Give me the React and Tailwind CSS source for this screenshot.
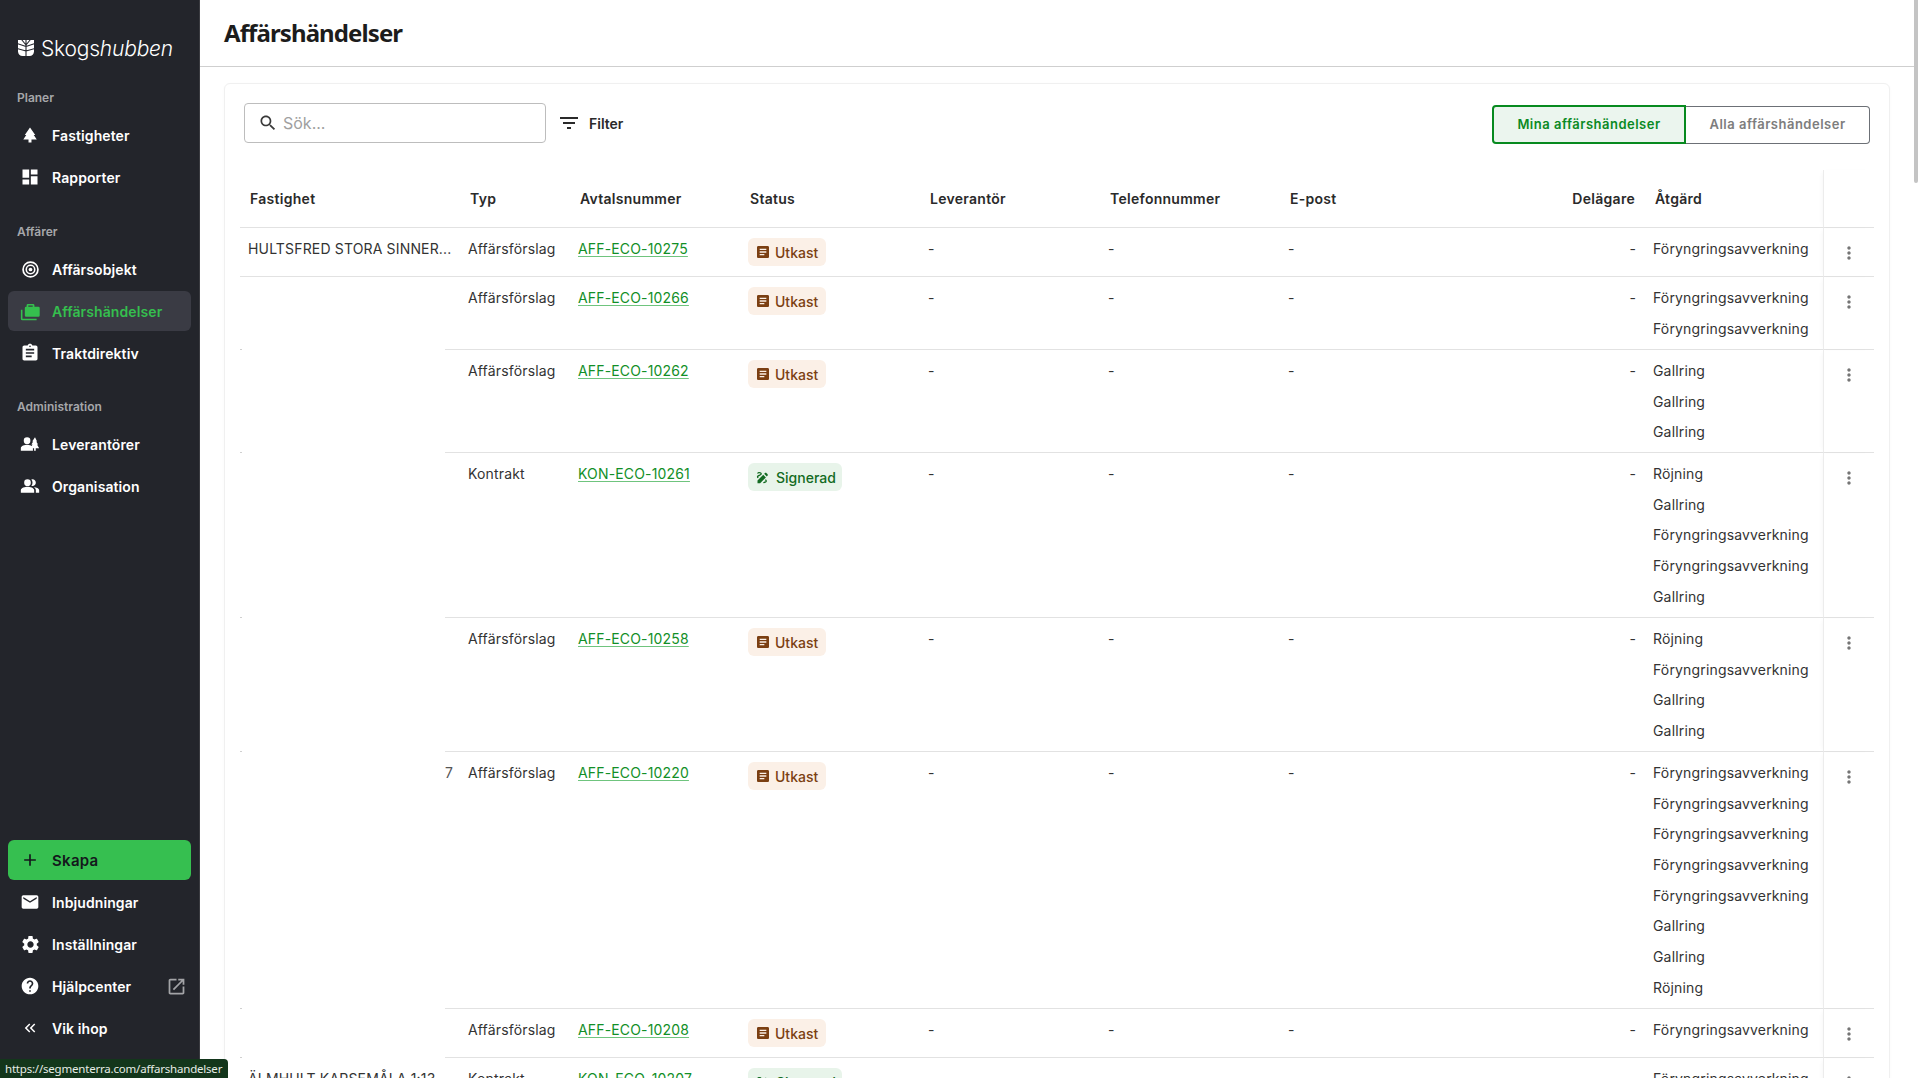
import React from 'react';

const Icon = ({ d, className = 'w-6 h-6', children }) => (
  <svg viewBox="0 0 24 24" fill="currentColor" className={className}>
    {d && <path d={d} />}
    {children}
  </svg>
);

const paths = {
  park: 'M17 12h2L12 2 5.05 12H7l-3.9 6h6.92v4h3.95v-4H21z',
  dashboard: 'M3 13h8V3H3v10zm0 8h8v-6H3v6zm10 0h8V11h-8v10zm0-18v6h8V3h-8z',
  assignment: 'M19 3h-4.18C14.4 1.84 13.3 1 12 1c-1.3 0-2.4.84-2.82 2H5c-1.1 0-2 .9-2 2v14c0 1.1.9 2 2 2h14c1.1 0 2-.9 2-2V5c0-1.1-.9-2-2-2zm-7 0c.55 0 1 .45 1 1s-.45 1-1 1-1-.45-1-1 .45-1 1-1zm2 14H7v-2h7v2zm3-4H7v-2h10v2zm0-4H7V7h10v2z',
  group: 'M16.67 13.13C18.04 14.06 19 15.32 19 17v3h4v-3c0-2.18-3.57-3.47-6.33-3.87zM9 4a4 4 0 1 0 0 8 4 4 0 0 0 0-8zM15 12c2.21 0 4-1.79 4-4s-1.79-4-4-4c-.47 0-.91.1-1.33.24C14.5 5.27 15 6.58 15 8s-.5 2.73-1.33 3.76c.42.14.86.24 1.33.24zM9 13c-2.67 0-8 1.34-8 4v3h16v-3c0-2.66-5.33-4-8-4z',
  supplier: 'M8.5 4a4 4 0 1 0 0 8 4 4 0 0 0 0-8zM8.5 13c-2.67 0-7.5 1.34-7.5 4v3h14.5v-3c0-2.66-4.33-4-7-4zM18 4l-3.4 5h1.2l-2.2 3.6h1.4l-1.6 2.9c.5.4 1 .9 1.3 1.5h2.2v3h2v-3H23l-2.6-4.4h1.3L19.5 9h1z',
  mail: 'M20 4H4c-1.1 0-1.99.9-1.99 2L2 18c0 1.1.9 2 2 2h16c1.1 0 2-.9 2-2V6c0-1.1-.9-2-2-2zm0 4l-8 5-8-5V6l8 5 8-5v2z',
  settings: 'M19.14 12.94c.04-.3.06-.61.06-.94 0-.32-.02-.64-.07-.94l2.03-1.58c.18-.14.23-.41.12-.61l-1.92-3.32c-.12-.22-.37-.29-.59-.22l-2.39.96c-.5-.38-1.03-.7-1.62-.94l-.36-2.54c-.04-.24-.24-.41-.48-.41h-3.84c-.24 0-.43.17-.47.41l-.36 2.54c-.59.24-1.13.57-1.62.94l-2.39-.96c-.22-.08-.47 0-.59.22L2.74 8.87c-.12.21-.08.47.12.61l2.03 1.58c-.05.3-.09.63-.09.94s.02.64.07.94l-2.03 1.58c-.18.14-.23.41-.12.61l1.92 3.32c.12.22.37.29.59.22l2.39-.96c.5.38 1.03.7 1.62.94l.36 2.54c.05.24.24.41.48.41h3.84c.24 0 .44-.17.47-.41l.36-2.54c.59-.24 1.13-.56 1.62-.94l2.39.96c.22.08.47 0 .59-.22l1.92-3.32c.12-.22.07-.47-.12-.61l-2.01-1.58zM12 15.6c-1.98 0-3.6-1.62-3.6-3.6s1.62-3.6 3.6-3.6 3.6 1.62 3.6 3.6-1.62 3.6-3.6 3.6z',
  help: 'M12 2C6.48 2 2 6.48 2 12s4.48 10 10 10 10-4.48 10-10S17.52 2 12 2zm1 17h-2v-2h2v2zm2.07-7.75l-.9.92C13.45 12.9 13 13.5 13 15h-2v-.5c0-1.1.45-2.1 1.17-2.83l1.24-1.26c.37-.36.59-.86.59-1.41 0-1.1-.9-2-2-2s-2 .9-2 2H8c0-2.21 1.79-4 4-4s4 1.79 4 4c0 .88-.36 1.68-.93 2.25z',
  open: 'M19 19H5V5h7V3H5c-1.11 0-2 .9-2 2v14c0 1.1.89 2 2 2h14c1.1 0 2-.9 2-2v-7h-2v7zM14 3v2h3.59l-9.83 9.83 1.41 1.41L19 6.41V10h2V3h-7z',
  plus: 'M19 13h-6v6h-2v-6H5v-2h6V5h2v6h6v2z',
  collapse: 'M17.59 18 19 16.59 14.42 12 19 7.41 17.59 6l-6 6zM11 18l1.41-1.41L7.83 12l4.58-4.59L11 6l-6 6z',
  search: 'M15.5 14h-.79l-.28-.27C15.41 12.59 16 11.11 16 9.5 16 5.91 13.09 3 9.5 3S3 5.91 3 9.5 5.91 16 9.5 16c1.61 0 3.09-.59 4.23-1.57l.27.28v.79l5 4.99L20.49 19l-4.99-5zm-6 0C7.01 14 5 11.99 5 9.5S7.01 5 9.5 5 14 7.01 14 9.5 11.99 14 9.5 14z',
  filter: 'M10 18h4v-2h-4v2zM3 6v2h18V6H3zm3 7h12v-2H6v2z',
  article: 'M19 3H5c-1.1 0-2 .9-2 2v14c0 1.1.9 2 2 2h14c1.1 0 2-.9 2-2V5c0-1.1-.9-2-2-2zm-5 14H7v-2h7v2zm3-4H7v-2h10v2zm0-4H7V7h10v2z',
  draw: 'M18.85 10.39l1.06-1.06c.78-.78.78-2.05 0-2.83L18.5 5.09c-.78-.78-2.05-.78-2.83 0l-1.06 1.06 4.24 4.24zm-5.66-2.83L4 16.76V21h4.24l9.19-9.19-4.24-4.25zM19 17.5c0 2.19-2.54 3.5-5 3.5-.55 0-1-.45-1-1s.45-1 1-1c1.54 0 3-.73 3-1.5 0-.47-.48-.87-1.23-1.2l1.48-1.48c1.07.63 1.75 1.47 1.75 2.68zM4.58 13.35C3.61 12.79 3 12.06 3 11c0-1.8 1.89-2.63 3.56-3.36C7.59 7.18 9 6.56 9 6c0-.41-.78-1-2-1-1.26 0-1.8.61-1.83.64-.35.41-.98.46-1.4.12-.41-.34-.49-.95-.15-1.38C3.73 4.24 4.76 3 7 3s4 1.32 4 3c0 1.87-1.93 2.72-3.64 3.47C6.42 9.88 5 10.5 5 11c0 .31.43.6 1.07.86l-1.49 1.49z',
  more: 'M12 8c1.1 0 2-.9 2-2s-.9-2-2-2-2 .9-2 2 .9 2 2 2zm0 2c-1.1 0-2 .9-2 2s.9 2 2 2 2-.9 2-2-.9-2-2-2zm0 6c-1.1 0-2 .9-2 2s.9 2 2 2 2-.9 2-2-.9-2-2-2z',
};

// white block cut by the dark "branch" slits of the logo
const Logo = () => (
  <svg viewBox="0 0 18 18" className="w-[18px] h-[18px] shrink-0">
    <path d="M1 1h16v11.500c0 2.500-2 4.500-4.500 4.500h-7C3 17 1 15 1 12.500z" fill="white" />
    <path d="M9 0v18M9 6 4.500 0.500M9 6l4.500-5.500M9 7.500 0 4.500M9 7.500l9-3M9 12 0 9.500M9 12l9-2.500" stroke="#23252b" strokeWidth="1.100" fill="none" />
  </svg>
);

const Target = () => (
  <svg viewBox="0 0 24 24" fill="none" stroke="currentColor" className="w-[17px] h-[17px]">
    <circle cx="12" cy="12" r="10.500" strokeWidth="2.400" />
    <circle cx="12" cy="12" r="6" strokeWidth="2.200" />
    <circle cx="12" cy="12" r="2.600" fill="currentColor" stroke="none" />
  </svg>
);

const Briefcase = () => (
  <svg viewBox="0 0 24 24" fill="currentColor" className="w-[21px] h-[21px]">
    <path d="M9 3.500h6a1.500 1.500 0 0 1 1.500 1.500v1.500H21a1.500 1.500 0 0 1 1.500 1.500v8.500a1.500 1.500 0 0 1-1.500 1.500H7a1.500 1.500 0 0 1-1.500-1.500V8A1.500 1.500 0 0 1 7 6.500h.5V5A1.500 1.500 0 0 1 9 3.500zM9.500 5v1.500h5V5z" />
    <path d="M1 10h1.800v10.200H19V22H2.800A1.800 1.800 0 0 1 1 20.200z" />
  </svg>
);

const NavItem = ({ icon, label, active, extra }) => (
  <div className={`flex items-center h-10 rounded-md pl-[10px] pr-[10px] text-[14px] font-semibold tracking-[0.1px] ${active ? 'bg-[#3a3b44] text-[#35bf4e]' : 'text-white'}`}>
    <span className="w-6 h-6 flex items-center justify-center shrink-0">{icon}</span>
    <span className="ml-[10px] flex-1">{label}</span>
    {extra}
  </div>
);

const Section = ({ label, className = '', children }) => (
  <div className={className}>
    <div className="h-[35px] flex items-center pl-[17px] text-[12px] font-semibold text-[#a6a7aa]">{label}</div>
    <div className="flex flex-col gap-[2px] px-2">{children}</div>
  </div>
);

const Sidebar = () => (
  <aside className="w-[200px] shrink-0 h-full bg-[#23252b] flex flex-col border-r border-[#3a3b40]">
    <div className="h-[80px] shrink-0 pt-4 flex items-center pl-[17px]">
      <Logo />
      <span className="ml-[6px] pt-px text-[21px] leading-none font-light text-white tracking-[-0.2px]">
        Skogs<em>hubben</em>
      </span>
    </div>
    <Section label="Planer">
      <NavItem icon={<Icon d={paths.park} className="w-[18px] h-[18px]" />} label="Fastigheter" />
      <NavItem icon={<Icon d={paths.dashboard} className="w-[20px] h-[20px]" />} label="Rapporter" />
    </Section>
    <Section label="Affärer" className="mt-[17px]">
      <NavItem icon={<Target />} label="Affärsobjekt" />
      <NavItem icon={<Briefcase />} label="Affärshändelser" active />
      <NavItem icon={<Icon d={paths.assignment} className="w-[20px] h-[20px]" />} label="Traktdirektiv" />
    </Section>
    <Section label="Administration" className="mt-4">
      <NavItem icon={<Icon d={paths.supplier} className="w-[20px] h-[20px]" />} label="Leverantörer" />
      <NavItem icon={<Icon d={paths.group} className="w-[20px] h-[20px]" />} label="Organisation" />
    </Section>
    <div className="mt-auto pb-[30px] px-2 flex flex-col gap-[2px]">
      <div className="flex items-center h-10 rounded-md pl-[10px] bg-[#36bf50] text-[#14181c] text-[15px] font-semibold tracking-[0.3px]">
        <span className="w-6 h-6 flex items-center justify-center"><Icon d={paths.plus} className="w-[20px] h-[20px]" /></span>
        <span className="ml-[10px] pt-[2px]">Skapa</span>
      </div>
      <NavItem icon={<Icon d={paths.mail} className="w-[20px] h-[20px]" />} label="Inbjudningar" />
      <NavItem icon={<Icon d={paths.settings} className="w-[21px] h-[21px]" />} label="Inställningar" />
      <NavItem
        icon={<Icon d={paths.help} className="w-[20px] h-[20px]" />}
        label="Hjälpcenter"
        extra={<Icon d={paths.open} className="w-[21px] h-[21px] text-[#a3a4a7] -mr-[6px]" />}
      />
      <NavItem icon={<Icon d={paths.collapse} className="w-[18px] h-[18px]" />} label="Vik ihop" />
    </div>
  </aside>
);

const Utkast = () => (
  <span className="inline-flex items-center h-7 w-[78px] rounded-md bg-[#fbf0e7] text-[#7b3f12] pl-[7px] text-[14px] font-medium">
    <Icon d={paths.article} className="w-[16px] h-[16px]" />
    <span className="ml-[4px]">Utkast</span>
  </span>
);

const Signerad = () => (
  <span className="inline-flex items-center h-7 w-[94px] rounded-md bg-[#e8f4ea] text-[#136b22] pl-[7px] text-[14px] font-medium">
    <Icon d={paths.draw} className="w-[15px] h-[15px]" />
    <span className="ml-[6px]">Signerad</span>
  </span>
);

const FOR = 'Föryngringsavverkning';

const rows = [
  { fastighet: 'HULTSFRED STORA SINNER...', full: true, typ: 'Affärsförslag', nr: 'AFF-ECO-10275', status: 'u', h: 'h-[49px]', atgard: [FOR] },
  { typ: 'Affärsförslag', nr: 'AFF-ECO-10266', status: 'u', h: 'h-[73px]', atgard: [FOR, FOR] },
  { typ: 'Affärsförslag', nr: 'AFF-ECO-10262', status: 'u', h: 'h-[103px]', atgard: ['Gallring', 'Gallring', 'Gallring'] },
  { typ: 'Kontrakt', nr: 'KON-ECO-10261', status: 's', h: 'h-[165px]', atgard: ['Röjning', 'Gallring', FOR, FOR, 'Gallring'] },
  { typ: 'Affärsförslag', nr: 'AFF-ECO-10258', status: 'u', h: 'h-[134px]', atgard: ['Röjning', FOR, 'Gallring', 'Gallring'] },
  { typ: 'Affärsförslag', lead: '7', nr: 'AFF-ECO-10220', status: 'u', h: 'h-[257px]', atgard: [FOR, FOR, FOR, FOR, FOR, 'Gallring', 'Gallring', 'Röjning'] },
  { typ: 'Affärsförslag', nr: 'AFF-ECO-10208', status: 'u', h: 'h-[49px]', atgard: [FOR] },
  { fastighet: 'ÄLMHULT KARSEMÅLA 1:13', typ: 'Kontrakt', nr: 'KON-ECO-10207', status: 's', h: 'h-[49px]', atgard: [FOR] },
];

const cell = 'align-top border-b border-[#e2e2e2] pt-[6px]';
const Line = ({ children }) => <div className="h-[30.700px] leading-[30.700px] whitespace-nowrap tracking-[0.16px]">{children}</div>;

const headCell = 'h-[58px] text-left align-middle border-b border-[#e2e2e2] font-semibold text-[14px] text-[#2a2a2a] tracking-[0.28px]';

const Table = () => (
  <table className="table-fixed w-[1634px] border-separate border-spacing-0 text-[14px] text-[#333333]">
    <thead>
      <tr>
        <th className={`${headCell} w-[205px] pl-[10px]`}>Fastighet</th>
        <th className={`${headCell} w-[125px] pl-[25px]`}>Typ</th>
        <th className={`${headCell} w-[170px] pl-[10px]`}>Avtalsnummer</th>
        <th className={`${headCell} w-[180px] pl-[10px]`}>Status</th>
        <th className={`${headCell} w-[180px] pl-[10px]`}>Leverantör</th>
        <th className={`${headCell} w-[180px] pl-[10px]`}>Telefonnummer</th>
        <th className={`${headCell} w-[200px] pl-[10px]`}>E-post</th>
        <th className={`${headCell} w-[165px] pr-[10px] text-right`}>Delägare</th>
        <th className={`${headCell} w-[178px] pl-[10px]`}>Åtgärd</th>
        <th className={`${headCell} w-[51px] border-l-[#ececec] border-l shadow-[-3px_0_5px_-3px_rgba(0,0,0,0.05)]`}></th>
      </tr>
    </thead>
    <tbody>
      {rows.map((r) => (
        <tr key={r.nr} className={r.h}>
          <td className={`relative align-top pt-[6px] pl-2 ${r.full ? 'border-b border-[#e2e2e2]' : ''}`}>
            {r.fastighet && <Line>{r.fastighet}</Line>}
            {!r.full && <span className="absolute left-0 bottom-0 w-[2px] h-px bg-[#d0d0d0]"></span>}
          </td>
          <td className={`${cell} pl-[23px]`}>
            <Line>
              {r.lead && <span className="inline-block w-[23px] -ml-[23px] text-[#555555]">{r.lead}</span>}
              {r.typ}
            </Line>
          </td>
          <td className={`${cell} pl-2`}>
            <Line>
              <a href="#" className="text-[#128f27] underline decoration-[#6fc47e] underline-offset-2">{r.nr}</a>
            </Line>
          </td>
          <td className="align-top border-b border-[#e2e2e2] pl-2 pt-[10px]">
            {r.status === 'u' ? <Utkast /> : <Signerad />}
          </td>
          <td className={`${cell} pl-2`}><Line>-</Line></td>
          <td className={`${cell} pl-2`}><Line>-</Line></td>
          <td className={`${cell} pl-2`}><Line>-</Line></td>
          <td className={`${cell} pr-[9px] text-right`}><Line>-</Line></td>
          <td className={`${cell} pl-2`}>
            {r.atgard.map((a, i) => <Line key={i}>{a}</Line>)}
          </td>
          <td className="align-top border-b border-l border-b-[#e2e2e2] border-l-[#ececec] pt-[15px] pl-[15px] shadow-[-3px_0_5px_-3px_rgba(0,0,0,0.05)]">
            <Icon d={paths.more} className="w-5 h-5 text-[#757575]" />
          </td>
        </tr>
      ))}
    </tbody>
  </table>
);

const App = () => (
  <div className="relative flex h-screen w-full overflow-hidden bg-white font-['Inter',sans-serif]">
    <Sidebar />
    <main className="flex-1 min-w-0 h-full flex flex-col overflow-hidden">
      <header className="h-[67px] shrink-0 border-b border-[#cfcfcf] flex items-center pl-[24px] pb-[1px]">
        <h1 className="font-['Noto_Sans',sans-serif] font-bold text-[24px] text-[#1c1c1c] tracking-[-0.9px]">Affärshändelser</h1>
      </header>
      <div className="flex-1 min-h-0 overflow-hidden pt-4 px-6">
        <section className="bg-white rounded-md border border-[#f0f0f0] shadow-[0_1px_3px_rgba(0,0,0,0.03)] h-[1200px]">
          <div className="flex items-start justify-between pt-[19px] pl-[19px] pr-[19px]">
            <div className="flex items-center">
              <div className="w-[302px] h-10 border border-[#bdbdbd] rounded flex items-center pl-[13px] text-[#a0a0a0] text-[16px]">
                <Icon d={paths.search} className="w-[20px] h-[20px] text-[#3a3a3a]" />
                <span className="ml-[5px]">Sök...</span>
              </div>
              <button className="ml-[11px] flex items-center text-[14px] font-semibold text-[#2a2a2a]">
                <Icon d={paths.filter} className="w-6 h-6" />
                <span className="ml-[8px]">Filter</span>
              </button>
            </div>
            <div className="flex items-center mt-[2px]">
              <button className="w-[194px] h-[39px] bg-[#ebf5ee] border-2 border-[#078a1f] rounded-l text-[#0a8a23] text-[13px] font-semibold tracking-[0.5px]">
                Mina affärshändelser
              </button>
              <button className="w-[184px] h-[38px] border border-l-0 border-[#6c7076] rounded-r text-[#7d7d7d] text-[13px] font-semibold tracking-[0.5px]">
                Alla affärshändelser
              </button>
            </div>
          </div>
          <div className="pl-[15px] pt-[26px]">
            <Table />
          </div>
        </section>
      </div>
    </main>
    <div className="w-1 shrink-0 h-full bg-white">
      <div className="h-[183px] bg-[#c4c4c4] rounded-b-sm"></div>
    </div>
    <div className="absolute left-0 bottom-0 h-[19px] w-[228px] bg-[#13361b] rounded-tr text-[#e6ece6] text-[11.500px] leading-[19px] pl-[5px] font-['Noto_Sans',sans-serif] tracking-[-0.2px] whitespace-nowrap">
      https://segmenterra.com/affarshandelser
    </div>
  </div>
);

export default App;
